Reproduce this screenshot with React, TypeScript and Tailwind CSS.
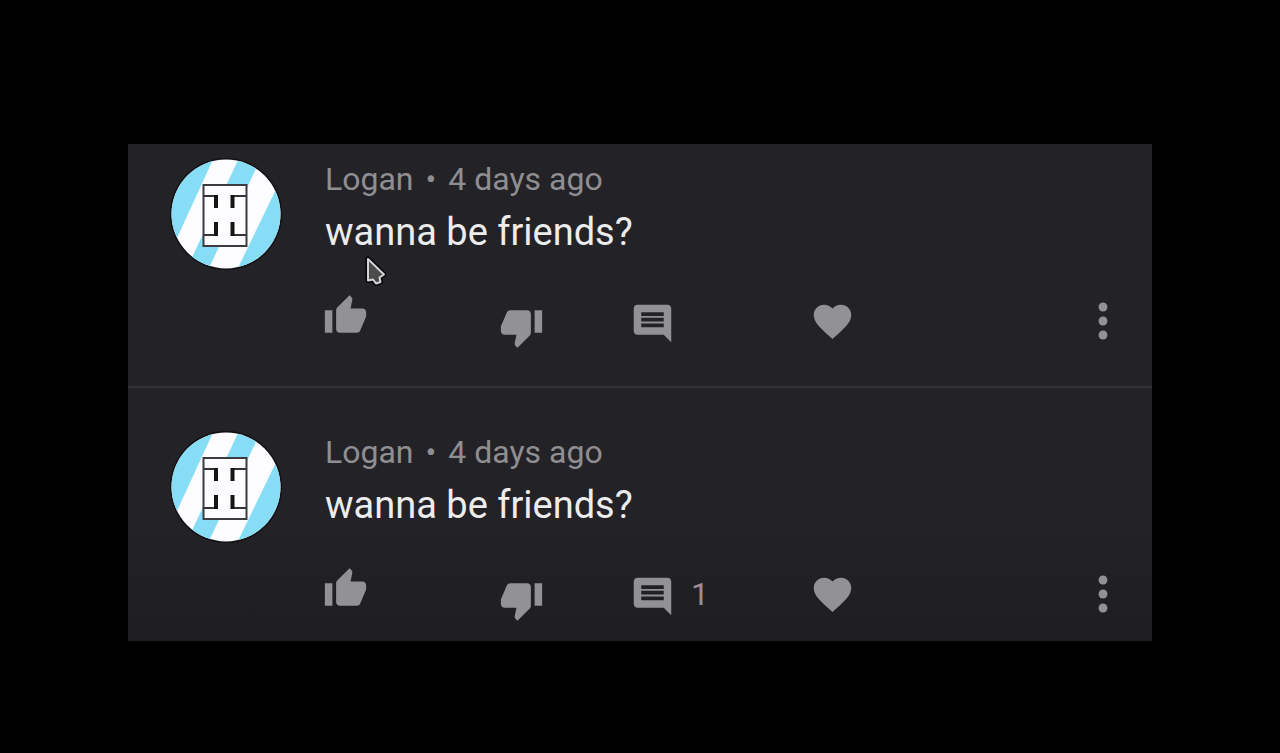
import { MdComment, MdFavorite, MdThumbDown, MdThumbUp } from "react-icons/md";

type Comment = { id: number; author: string; age: string; text: string; replies?: number };

const comments: Comment[] = [
  { id: 1, author: "Logan", age: "4 days ago", text: "wanna be friends?" },
  { id: 2, author: "Logan", age: "4 days ago", text: "wanna be friends?", replies: 1 },
];

function Avatar({ id }: { id: number }) {
  const clip = `avatar-${id}`;
  return (
    <svg viewBox="0 0 112 112" className="size-28 shrink-0" role="img" aria-label="Logan">
      <clipPath id={clip}>
        <circle cx="56" cy="56" r="54.5" />
      </clipPath>
      <circle cx="56" cy="56" r="56" fill="#111013" />
      <g clipPath={`url(#${clip})`}>
        <rect width="112" height="112" fill="#fdfcff" />
        <path d="M-10 -5H46L7 80L-10 100Z" fill="#87dcf6" />
        <path d="M70 -2H92L38 112H16Z" fill="#87dcf6" />
        <path d="M112 19L67 112H120V19Z" fill="#87dcf6" />
      </g>
      <rect x="33.5" y="27" width="43" height="61" fill="#fdfcff" stroke="#3d3b3f" strokeWidth="2" />
      <path d="M34 38H47M76 38H62M34 77H47M76 77H62" stroke="#333" strokeWidth="2" fill="none" />
      <path d="M46 37V50M62.5 37V50M46 64V78M62.5 64V78" stroke="#151515" strokeWidth="4" fill="none" />
    </svg>
  );
}

function Pointer() {
  return (
    <svg viewBox="0 0 22 32" className="absolute left-[39px] top-[97px] h-8 w-[22px]" aria-hidden="true">
      <path
        d="M4 4V25.500L9 24.500L12 28.500L16.500 27L15.500 22.500L20 19.500Z"
        fill="#4b4b4e"
        stroke="#050505"
        strokeWidth="5"
        strokeLinejoin="round"
      />
      <path
        d="M4 4V25.500L9 24.500L12 28.500L16.500 27L15.500 22.500L20 19.500Z"
        fill="#4b4b4e"
        stroke="#d4d4d4"
        strokeWidth="2"
        strokeLinejoin="round"
      />
    </svg>
  );
}

function CommentCard({ comment, first }: { comment: Comment; first: boolean }) {
  return (
    <article
      className={
        first
          ? "flex gap-[43px] border-b-2 border-[#333236] pb-[37px] pl-[42px] pr-[21px] pt-3.5"
          : "flex gap-[43px] pb-[19px] pl-[42px] pr-[21px] pt-[43px]"
      }
    >
      <Avatar id={comment.id} />
      <div className="relative min-w-0 flex-1 pt-px">
        <header className="flex gap-3 text-[32px] leading-10 text-[#8f8e91]">
          <span>{comment.author}</span>
          <span>•</span>
          <span>{comment.age}</span>
        </header>
        <p className="mt-[9px] text-[38px] leading-[48px] text-[#ececed]">{comment.text}</p>
        <div className="-ml-0.5 mt-[37px] grid h-14 grid-cols-[176px_131px_180px_1fr_56px] items-center text-[#929194]">
          <button type="button" aria-label="Like" className="justify-self-start">
            <MdThumbUp viewBox="0 3 24 24" className="size-[45px] overflow-visible" />
          </button>
          <button type="button" aria-label="Dislike" className="justify-self-start">
            <MdThumbDown viewBox="0 -3 24 24" className="size-[45px] overflow-visible" />
          </button>
          <button type="button" aria-label="Replies" className="flex items-center gap-4 justify-self-start">
            <MdComment viewBox="0 -1 24 24" className="size-[45px] overflow-visible" />
            {comment.replies && <span className="text-[32px] leading-10">{comment.replies}</span>}
          </button>
          <button type="button" aria-label="Heart" className="justify-self-start">
            <MdFavorite className="size-[45px]" />
          </button>
          <button type="button" aria-label="More actions">
            <svg viewBox="0 0 24 24" className="size-14 fill-current" aria-hidden="true">
              <circle cx="12" cy="6" r="1.900" />
              <circle cx="12" cy="12" r="1.900" />
              <circle cx="12" cy="18" r="1.900" />
            </svg>
          </button>
        </div>
        {first && <Pointer />}
      </div>
    </article>
  );
}

export default function App() {
  return (
    <main className="min-h-screen bg-black px-[10%] pt-36 font-[Roboto,sans-serif]">
      <section aria-label="Comments" className="bg-linear-to-b from-[#232226] from-75% to-[#1e1d20]">
        {comments.map((comment, i) => (
          <CommentCard key={comment.id} comment={comment} first={i === 0} />
        ))}
      </section>
    </main>
  );
}
